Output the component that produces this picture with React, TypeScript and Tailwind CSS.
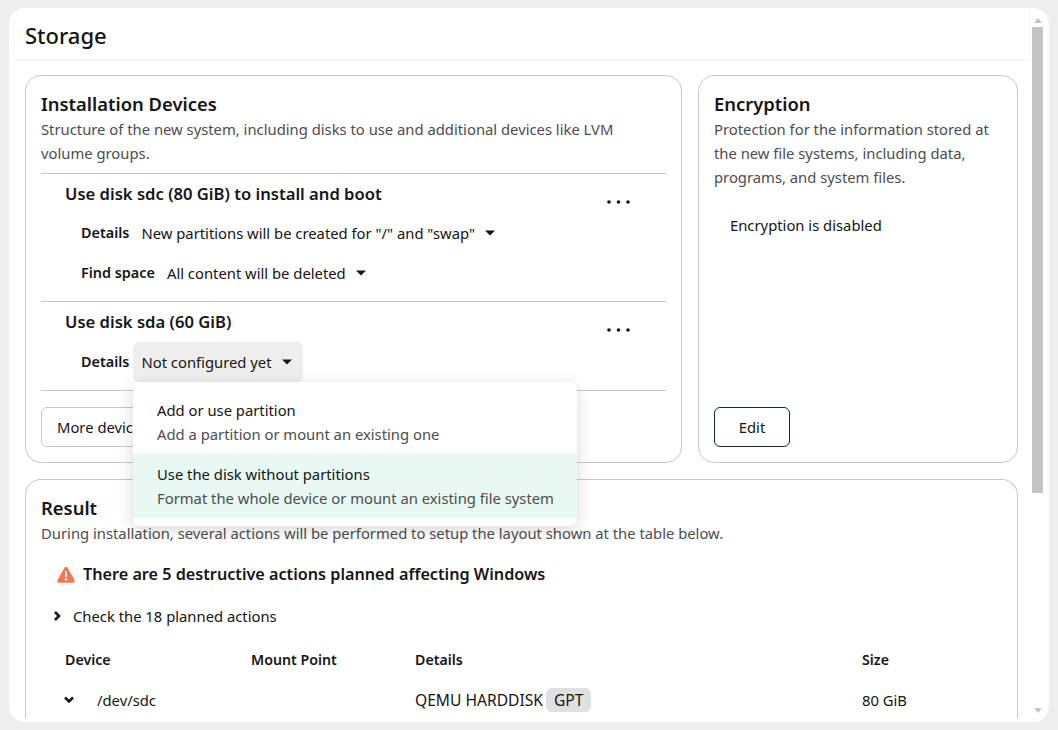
import React from 'react';

const Caret = () => (
  <svg width="10" height="6" viewBox="0 0 10 6" className="shrink-0">
    <path d="M0 0.5h10L5 5.5z" fill="#151515" />
  </svg>
);

const Kebab = () => (
  <svg width="23" height="4" viewBox="0 0 23 4" className="shrink-0">
    <circle cx="2" cy="2" r="1.8" fill="#151515" />
    <circle cx="11.5" cy="2" r="1.8" fill="#151515" />
    <circle cx="21" cy="2" r="1.8" fill="#151515" />
  </svg>
);

function Chevron({ down = false }: { down?: boolean }) {
  return (
    <svg width="12" height="12" viewBox="0 0 12 12" className="shrink-0">
      <path
        d={down ? 'M2 3.5l4 4 4-4' : 'M4 2l4 4-4 4'}
        fill="none"
        stroke="#151515"
        strokeWidth="2.6"
      />
    </svg>
  );
}

function DetailRow({ label, value, open = false }: { label: string; value: string; open?: boolean }) {
  return (
    <div className="relative flex items-center h-10 pl-10">
      <span className="w-auto font-semibold text-[14.4px] text-[#151515] mr-1">{label}</span>
      <button
        className={`flex items-center h-10 pl-2 pr-[11px] gap-[10px] rounded-md text-[#151515] ${open ? 'bg-[#eeeeee]' : ''}`}
      >
        {value}
        <Caret />
      </button>
      {open && (
        <div className="absolute z-10 left-[92px] top-10 w-[444px] py-2 bg-white rounded-md shadow-[0_4px_16px_rgba(0,0,0,0.16)]">
          <div className="h-16 px-6 pt-2">
            <p className="text-[#151515] leading-6">Add or use partition</p>
            <p className="text-[#4d4d4d] leading-6">Add a partition or mount an existing one</p>
          </div>
          <div className="h-16 px-6 pt-2 bg-[#e8f8f3]">
            <p className="text-[#151515] leading-6">Use the disk without partitions</p>
            <p className="text-[#4d4d4d] leading-6 whitespace-nowrap">Format the whole device or mount an existing file system</p>
          </div>
        </div>
      )}
    </div>
  );
}

function DiskHead({ title }: { title: string }) {
  return (
    <div className="flex justify-between pl-6 pr-9">
      <h3 className="text-[16.6px] font-semibold text-[#151515] leading-6">{title}</h3>
      <div className="pt-[18px]">
        <Kebab />
      </div>
    </div>
  );
}

export default function App() {
  return (
    <div
      className="h-screen overflow-hidden bg-[#eeeeee] pt-2 pb-2 pl-[9px] pr-[9px] text-[14.8px] leading-6"
      style={{ fontFamily: '"Noto Sans", sans-serif' }}
    >
      <div className="relative h-full bg-white rounded-2xl flex flex-col overflow-hidden pb-1">
        <header className="h-[51px] shrink-0 ml-[6px] mr-5 pl-[10px] pt-[2px] flex items-center shadow-[0_1px_3px_rgba(0,0,0,0.08)]">
          <h1 className="text-[22px] font-medium text-[#151515]">Storage</h1>
        </header>

        <main className="flex-1 min-h-0 overflow-hidden pt-4 pl-4 pr-[31px]">
          <div className="flex gap-4">
            <section className="w-[657px] h-[388px] shrink-0 border border-[#c7c7c7] rounded-2xl px-[15px] pt-[15px]">
              <h2 className="text-[18.4px] font-semibold text-[#151515] leading-[26px]">Installation Devices</h2>
              <p className="text-[#4d4d4d] pr-8">
                Structure of the new system, including disks to use and additional devices like LVM volume groups.
              </p>
              <div className="border-t border-[#c7c7c7] mt-2 pt-2 h-[128px]">
                <DiskHead title="Use disk sdc (80 GiB) to install and boot" />
                <div className="mt-[7px]">
                  <DetailRow label="Details" value={'New partitions will be created for "/" and "swap"'} />
                  <DetailRow label="Find space" value="All content will be deleted" />
                </div>
              </div>
              <div className="border-t border-[#c7c7c7] pt-2 h-[89px]">
                <DiskHead title="Use disk sda (60 GiB)" />
                <div className="mt-2">
                  <DetailRow label="Details" value="Not configured yet" open />
                </div>
              </div>
              <div className="border-t border-[#c7c7c7] pt-4">
                <button className="h-10 w-[150px] text-left px-[15px] border border-[#c7c7c7] rounded-md text-[#151515]">
                  More devices
                </button>
              </div>
            </section>

            <section className="flex-1 h-[388px] border border-[#c7c7c7] rounded-2xl px-[15px] pt-[15px] flex flex-col">
              <h2 className="text-[18.4px] font-semibold text-[#151515] leading-[26px]">Encryption</h2>
              <p className="text-[#4d4d4d]">
                Protection for the information stored at the new file systems, including data, programs, and system files.
              </p>
              <p className="text-[#151515] pl-4 mt-[24px]">Encryption is disabled</p>
              <button className="mt-auto mb-[15px] h-10 w-[76px] border border-[#0c322c] rounded-md text-[#151515]">
                Edit
              </button>
            </section>
          </div>

          <section className="mt-4 border border-[#c7c7c7] rounded-t-2xl border-b-0 px-[15px] pt-[15px] h-[300px]">
            <h2 className="text-[18.4px] font-semibold text-[#151515] leading-[26px]">Result</h2>
            <p className="text-[#4d4d4d]">
              During installation, several actions will be performed to setup the layout shown at the table below.
            </p>
            <div className="flex items-center gap-2 pl-4 mt-[17px]">
              <svg width="18" height="17" viewBox="0 0 18 17" className="shrink-0">
                <path d="M9 .8a1.6 1.6 0 0 1 1.4.8l7.2 12.7a1.6 1.6 0 0 1-1.4 2.4H1.8a1.6 1.6 0 0 1-1.4-2.4L7.6 1.6A1.6 1.6 0 0 1 9 .8z" fill="#f8774a" />
                <rect x="8" y="5" width="2" height="6" rx="0.8" fill="#fff" />
                <circle cx="9" cy="13.3" r="1.2" fill="#fff" />
              </svg>
              <h3 className="text-[16.2px] font-semibold text-[#151515] leading-6">
                There are 5 destructive actions planned affecting Windows
              </h3>
            </div>
            <div className="flex items-center gap-[10px] pl-[10px] mt-[18px]">
              <Chevron />
              <span className="text-[#151515]">Check the 18 planned actions</span>
            </div>
            <table className="mt-3 table-fixed w-full text-[#151515]">
              <colgroup>
                <col className="w-[210px]" />
                <col className="w-[164px]" />
                <col className="w-[447px]" />
                <col />
              </colgroup>
              <thead>
                <tr className="h-10 text-left text-[14.2px]">
                  <th className="pl-6 font-semibold">Device</th>
                  <th className="font-semibold">Mount Point</th>
                  <th className="font-semibold">Details</th>
                  <th className="font-semibold">Size</th>
                </tr>
              </thead>
              <tbody>
                <tr className="h-10">
                  <td className="pl-[22px]">
                    <span className="flex items-center gap-[22px]">
                      <Chevron down />
                      /dev/sdc
                    </span>
                  </td>
                  <td />
                  <td className="text-[15.6px]">
                    QEMU HARDDISK
                    <span className="inline-block ml-[3px] px-2 rounded-md bg-[#e0e0e0]">GPT</span>
                  </td>
                  <td>80 GiB</td>
                </tr>
              </tbody>
            </table>
          </section>
        </main>

        {/* drawn scrollbar, sits over the panel */}
        <div className="absolute top-0 bottom-0 right-[6px] w-[11px] flex flex-col items-center pt-[10px]">
          <svg width="8" height="5" viewBox="0 0 8 5" className="mb-[4px]">
            <path d="M4 0l4 5H0z" fill="#c4c4c4" />
          </svg>
          <div className="w-[11px] h-[466px] bg-[#c4c4c4]" />
          <svg width="8" height="5" viewBox="0 0 8 5" className="mt-auto mb-[9px]">
            <path d="M0 0h8L4 5z" fill="#c4c4c4" />
          </svg>
        </div>
      </div>
    </div>
  );
}
